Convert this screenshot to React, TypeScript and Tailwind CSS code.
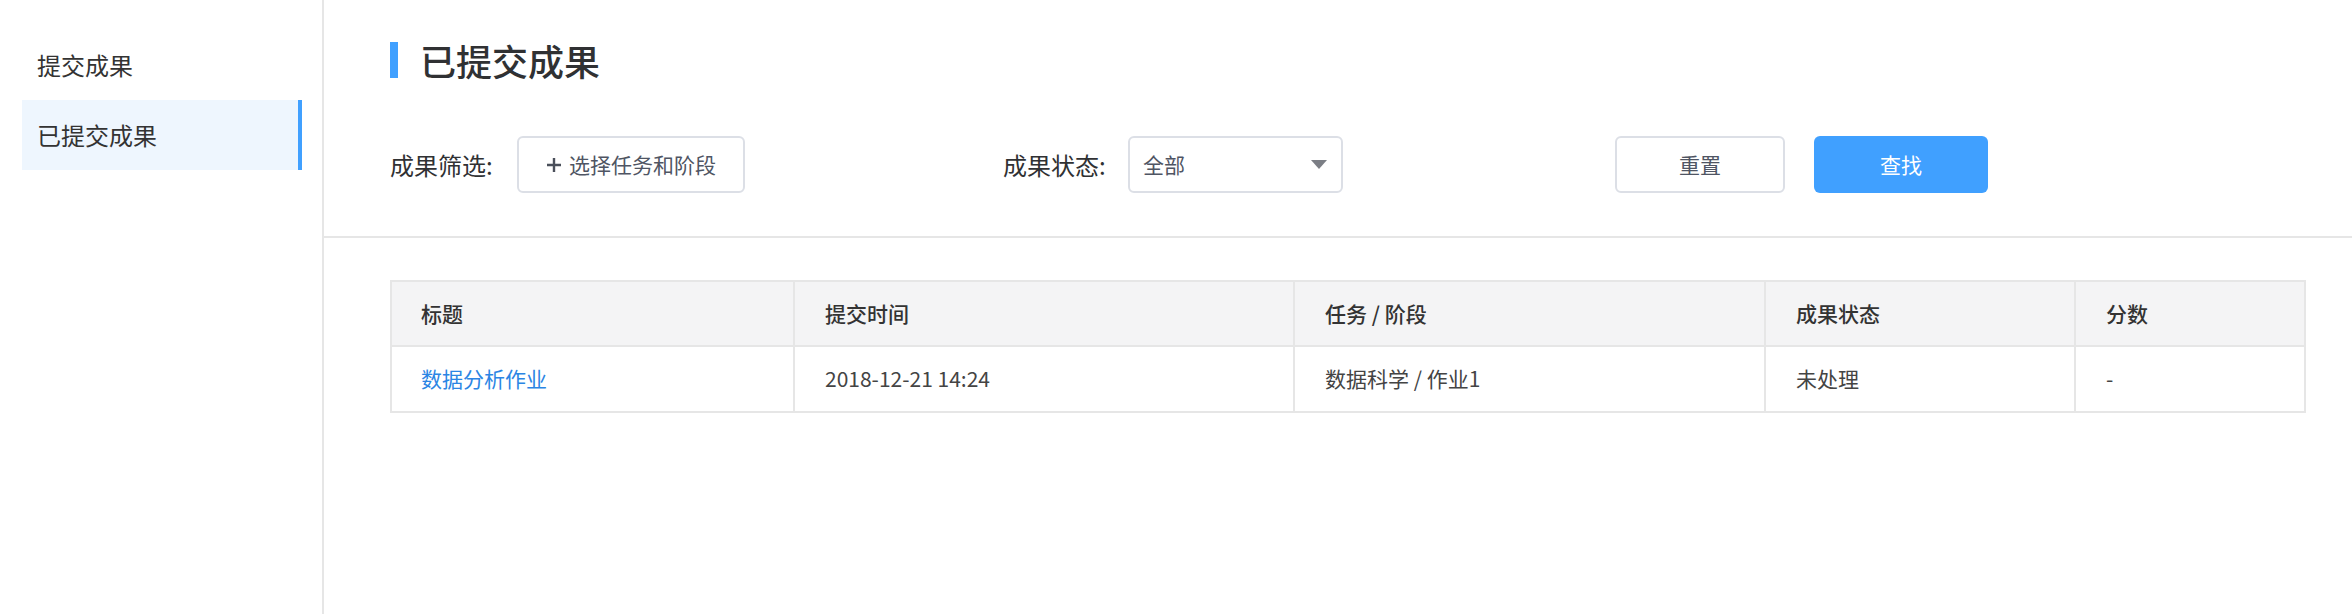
const font = { fontFamily: '"Noto Sans CJK SC", "Liberation Sans", sans-serif' };

const columns = [
  { title: '标题', w: 'w-[401px]' },
  { title: '提交时间', w: 'w-[500px]' },
  { title: '任务 / 阶段', w: 'w-[471px]' },
  { title: '成果状态', w: 'w-[310px]' },
  { title: '分数', w: 'flex-1' },
];

const rows = [
  { title: '数据分析作业', time: '2018-12-21 14:24', task: '数据科学 / 作业1', status: '未处理', score: '-' },
];

function Sidebar() {
  return (
    <aside className="w-[324px] shrink-0 border-r-2 border-[#e6e6e6] min-h-[614px] pt-[30px]">
      <div className="mx-[22px] h-[70px] flex items-center pl-[15px] text-[24px] text-[#333]">提交成果</div>
      <div className="ml-[22px] mr-[20px] h-[70px] flex items-center pl-[15px] text-[24px] text-[#333] bg-[#eef6fe] border-r-4 border-[#40a0ff]">
        已提交成果
      </div>
    </aside>
  );
}

function Filters() {
  return (
    <div className="flex items-center mt-[58px] h-[57px]">
      <span className="w-[127px] text-[24px] text-[#303133]">成果筛选:</span>
      <button className="w-[228px] h-[57px] rounded-[6px] border-2 border-[#dcdfe6] bg-white flex items-center justify-center gap-[7px] text-[21px] text-[#4f5563]">
        <svg width="16" height="16" viewBox="0 0 16 16">
          <path d="M8 1v14M1 8h14" stroke="#4a4f5a" strokeWidth="2.4" />
        </svg>
        选择任务和阶段
      </button>
      <span className="ml-[258px] w-[125px] text-[24px] text-[#303133]">成果状态:</span>
      <div className="w-[215px] h-[57px] rounded-[6px] border-2 border-[#dcdfe6] flex items-center justify-between pl-[13px] pr-[14px]">
        <span className="text-[21px] text-[#4f5563]">全部</span>
        <svg width="16" height="10" viewBox="0 0 16 10">
          <path d="M0 0h16L8 9z" fill="#7b7e85" />
        </svg>
      </div>
      <button className="ml-[272px] w-[170px] h-[57px] rounded-[6px] border-2 border-[#dcdfe6] bg-white text-[21px] text-[#4f5563]">
        重置
      </button>
      <button className="ml-[29px] w-[174px] h-[57px] rounded-[6px] bg-[#40a0ff] text-[21px] text-white">查找</button>
    </div>
  );
}

function ResultTable() {
  return (
    <div className="border-2 border-[#e6e6e6] text-[21px]">
      <div className="flex h-[65px] bg-[#f4f4f5] border-b-2 border-[#e6e6e6]">
        {columns.map((c, i) => (
          <div
            key={c.title}
            className={`${c.w} flex items-center font-medium text-[#333] ${i === 0 ? 'pl-[29px]' : 'pl-[30px] border-l-2 border-[#e6e6e6]'}`}
          >
            {c.title}
          </div>
        ))}
      </div>
      {rows.map((r) => (
        <div key={r.title} className="flex h-[64px] text-[#444]">
          <div className="w-[401px] flex items-center pl-[29px] text-[#2b85e4]">{r.title}</div>
          <div className="w-[500px] flex items-center pl-[30px] border-l-2 border-[#e6e6e6]">{r.time}</div>
          <div className="w-[471px] flex items-center pl-[30px] border-l-2 border-[#e6e6e6]">{r.task}</div>
          <div className="w-[310px] flex items-center pl-[30px] border-l-2 border-[#e6e6e6]">{r.status}</div>
          <div className="flex-1 flex items-center pl-[30px] border-l-2 border-[#e6e6e6]">{r.score}</div>
        </div>
      ))}
    </div>
  );
}

export default function App() {
  return (
    <div className="flex w-[2352px] min-h-[614px] bg-white" style={font}>
      <Sidebar />
      <main className="flex-1">
        <section className="pt-[42px] pb-[43px] pl-[66px] border-b-2 border-[#e6e6e6]">
          <div className="flex items-center h-[36px]">
            <span className="w-[8px] h-[36px] bg-[#40a0ff]" />
            <h1 className="ml-[22px] text-[36px] leading-none font-medium text-[#303133]">已提交成果</h1>
          </div>
          <Filters />
        </section>
        <section className="pt-[42px] pl-[66px] pr-[46px]">
          <ResultTable />
        </section>
      </main>
    </div>
  );
}
